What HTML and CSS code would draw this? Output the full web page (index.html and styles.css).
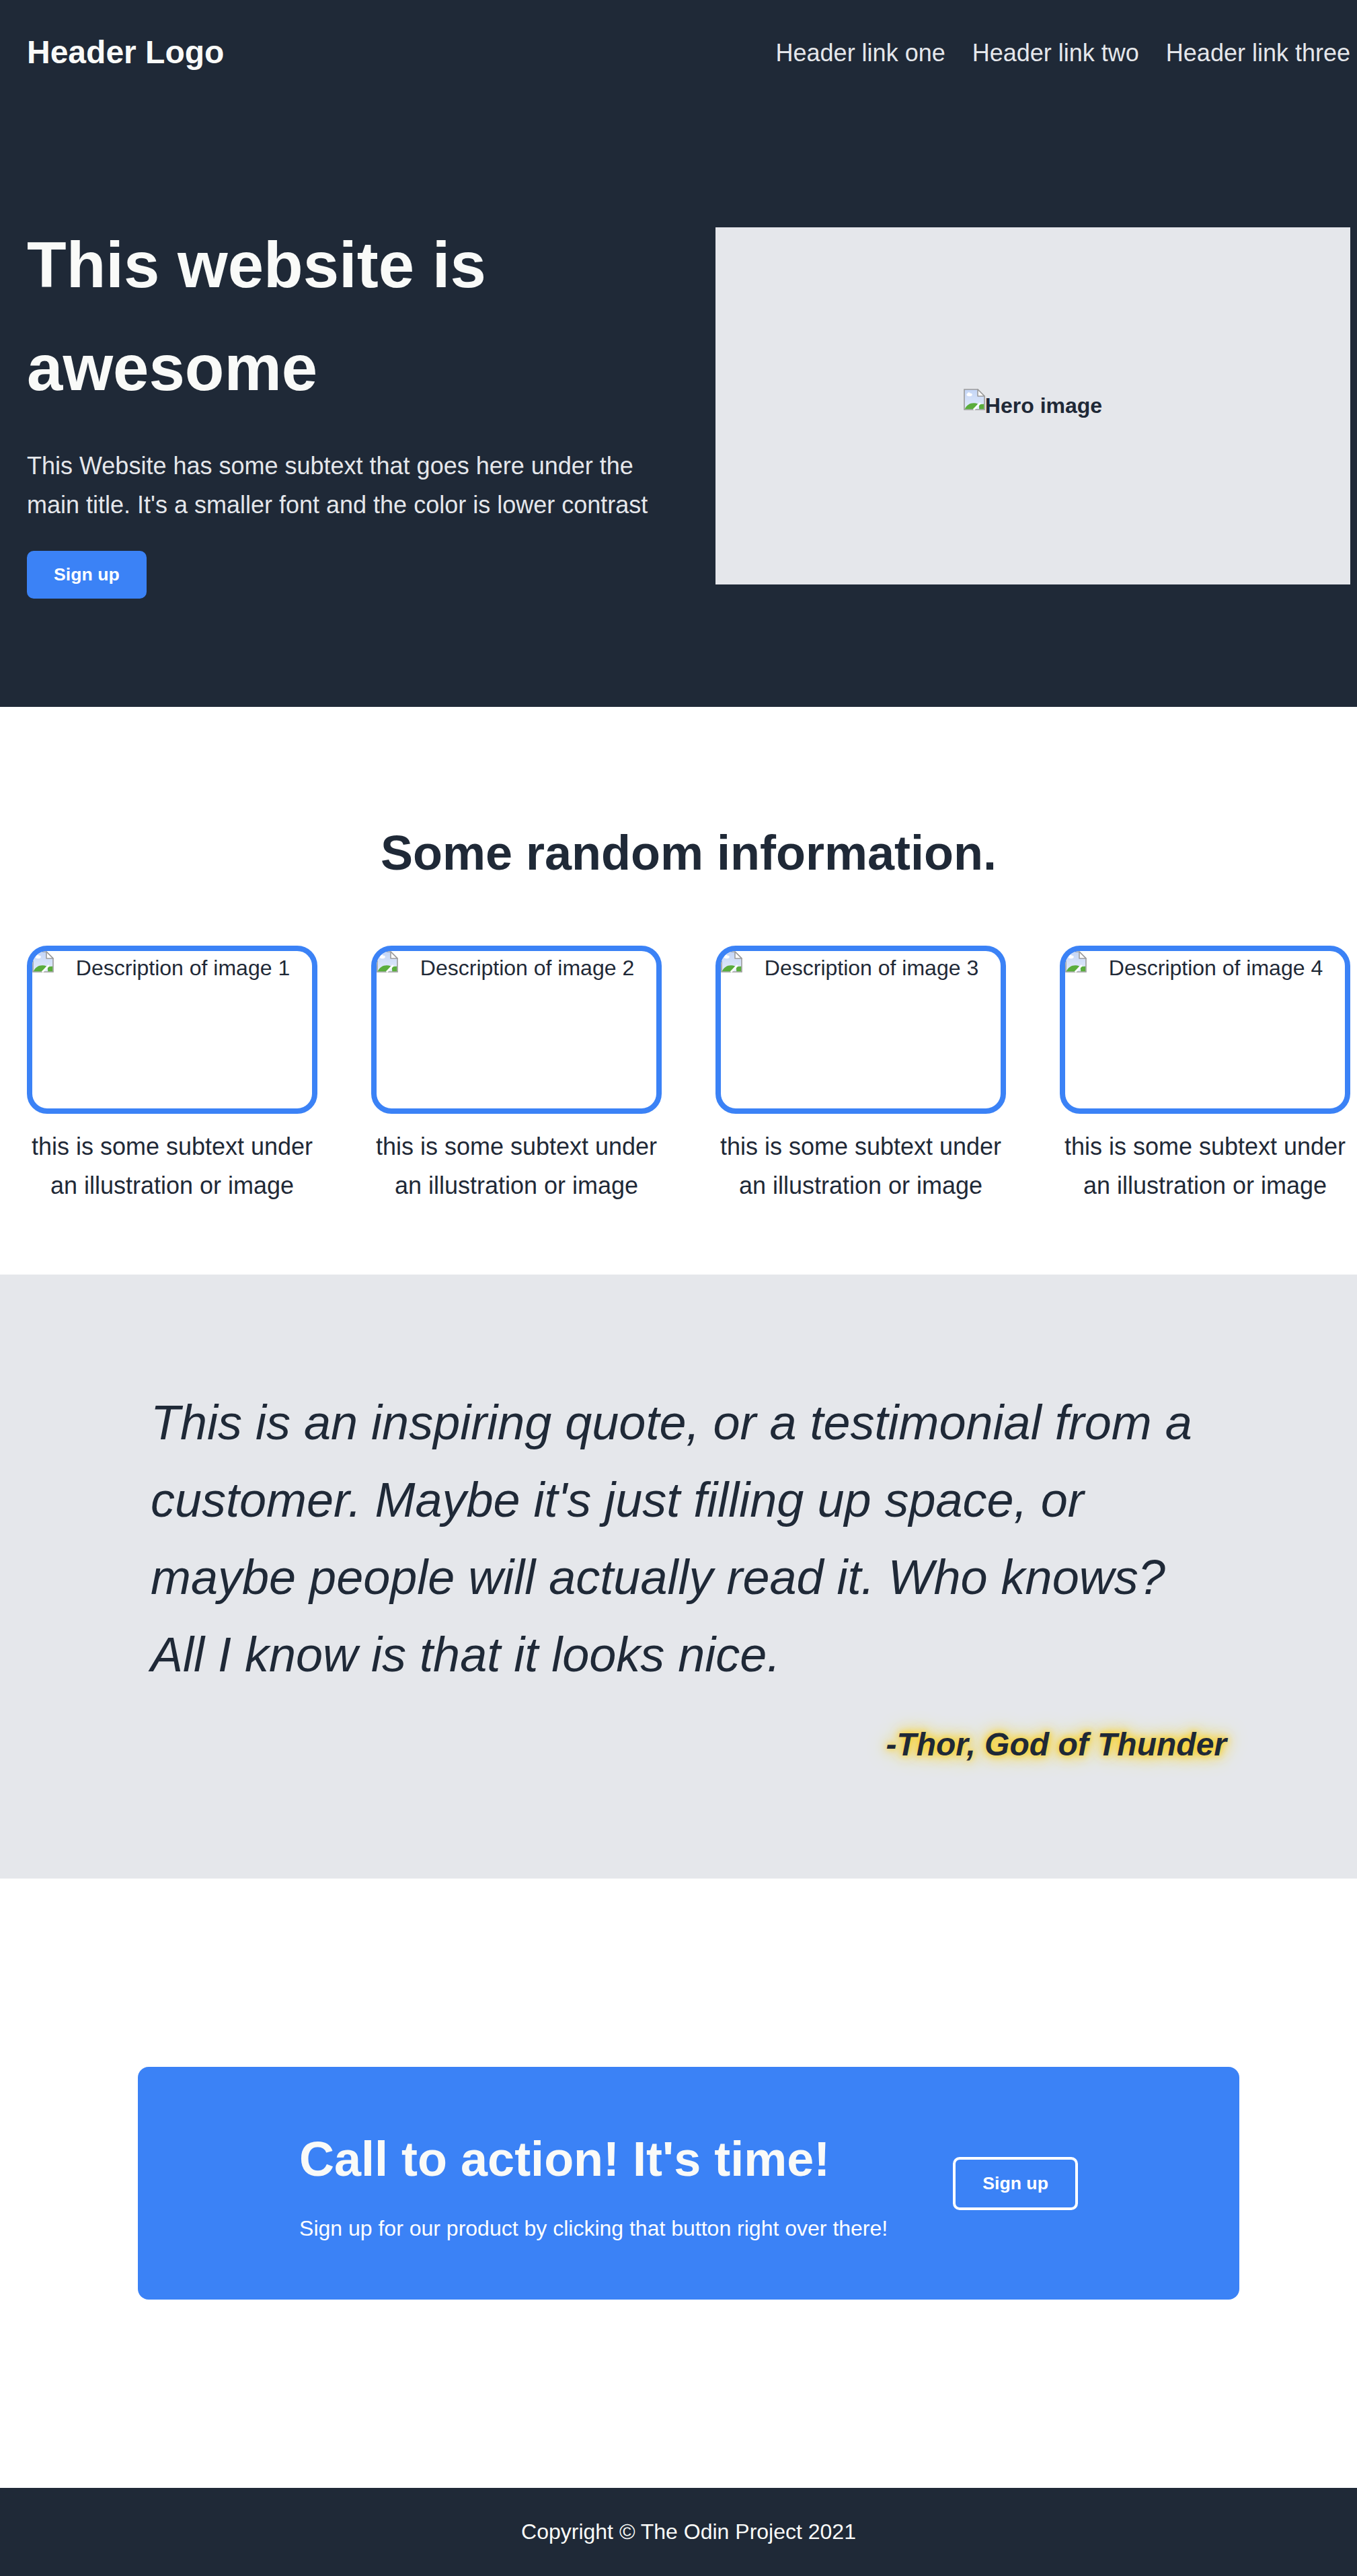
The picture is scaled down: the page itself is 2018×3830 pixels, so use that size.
FILE: index.html
```html
<!DOCTYPE html>
<html lang="en">
<head>
<meta charset="utf-8">
<title>Landing Page</title>
<link rel="stylesheet" href="styles.css">
</head>
<body>
<svg class="defs" width="0" height="0" aria-hidden="true">
  <defs>
    <linearGradient id="bi-grad" x1="0" y1="0" x2="0" y2="1">
      <stop offset="0" stop-color="#c3d5f6"/>
      <stop offset="1" stop-color="#e4ecfb"/>
    </linearGradient>
    <symbol id="broken" viewBox="0 0 16 16">
      <path d="M0.5 0.5H10.5L15.5 5.5V15.5H0.5Z" fill="url(#bi-grad)" stroke="#9c9c9c" stroke-width="0.8"/>
      <path d="M10.5 0.5V5.5H15.5Z" fill="#ffffff" stroke="#9c9c9c" stroke-width="0.8" stroke-linejoin="round"/>
      <ellipse cx="4.3" cy="4.4" rx="2.1" ry="1.2" fill="#ffffff"/>
      <circle cx="3.9" cy="3.5" r="0.9" fill="#ffffff"/>
      <path d="M0.9 15.1C2.2 11.4 6.6 9.6 10.6 11.2L7.6 15.1Z" fill="#5aad3c"/>
      <path d="M11.4 11.6L15.1 11.4L15.1 15.1L11.6 15.1Z" fill="#5aad3c"/>
      <path d="M7.4 15.6L12.4 10.6" stroke="#ffffff" stroke-width="1.4"/>
    </symbol>
  </defs>
</svg>

<div class="dark">
  <header class="wrap header">
    <div class="logo">Header Logo</div>
    <nav class="nav">
      <a href="#">Header link one</a>
      <a href="#">Header link two</a>
      <a href="#">Header link three</a>
    </nav>
  </header>

  <section class="wrap hero">
    <div class="hero-text">
      <h1>This website is awesome</h1>
      <p>This Website has some subtext that goes here under the main title. It's a smaller font and the color is lower contrast</p>
      <button class="btn">Sign up</button>
    </div>
    <div class="hero-img">
      <div class="alt">
        <svg class="bicon"><use href="#broken"/></svg>
        <span>Hero image</span>
      </div>
    </div>
  </section>
</div>

<section class="info">
  <div class="wrap">
    <h2 class="info-title">Some random information.</h2>
    <div class="cards">
      <div class="card">
        <div class="card-img"><svg class="bicon float"><use href="#broken"/></svg><p>Description of image 1</p></div>
        <p class="card-text">this is some subtext under an illustration or image</p>
      </div>
      <div class="card">
        <div class="card-img"><svg class="bicon float"><use href="#broken"/></svg><p>Description of image 2</p></div>
        <p class="card-text">this is some subtext under an illustration or image</p>
      </div>
      <div class="card">
        <div class="card-img"><svg class="bicon float"><use href="#broken"/></svg><p>Description of image 3</p></div>
        <p class="card-text">this is some subtext under an illustration or image</p>
      </div>
      <div class="card">
        <div class="card-img"><svg class="bicon float"><use href="#broken"/></svg><p>Description of image 4</p></div>
        <p class="card-text">this is some subtext under an illustration or image</p>
      </div>
    </div>
  </div>
</section>

<section class="quote-sec">
  <div class="wrap">
    <div class="quote">
      <p class="quote-text">This is an inspiring quote, or a testimonial from a customer. Maybe it's just filling up space, or maybe people will actually read it. Who knows? All I know is that it looks nice.</p>
      <p class="quote-author">-Thor, God of Thunder</p>
    </div>
  </div>
</section>

<section class="cta-sec">
  <div class="wrap cta-wrap">
    <div class="cta">
      <div class="cta-text">
        <h2>Call to action! It's time!</h2>
        <p>Sign up for our product by clicking that button right over there!</p>
      </div>
      <button class="btn btn-outline">Sign up</button>
    </div>
  </div>
</section>

<footer class="footer">
  <div class="wrap footer-inner">Copyright © The Odin Project 2021</div>
</footer>
</body>
</html>
```

FILE: styles.css
```css
* {
  box-sizing: border-box;
}

html, body {
  margin: 0;
  padding: 0;
}

body {
  font-family: "Liberation Sans", Arial, sans-serif;
  font-size: 36px;
  line-height: 1.6;
  color: #1f2937;
  background: #ffffff;
}

.defs {
  position: absolute;
  width: 0;
  height: 0;
  overflow: hidden;
}

.wrap {
  width: 1968px;
  margin-left: 40px;
}

.dark {
  background: #1f2937;
}

/* Header */
.header {
  display: flex;
  justify-content: space-between;
  align-items: center;
  padding: 40px 0;
}

.logo {
  font-size: 48px;
  font-weight: bold;
  color: #f9faf8;
}

.nav {
  display: flex;
  gap: 40px;
}

.nav a {
  color: #e5e7eb;
  text-decoration: none;
  font-size: 36px;
}

/* Hero */
.hero {
  display: flex;
  align-items: center;
  gap: 80px;
  padding: 160px 0 161px;
}

.hero-text {
  width: 944px;
  flex: none;
}

.hero-text h1 {
  margin: 0;
  font-size: 96px;
  font-weight: bold;
  line-height: 1.6;
  color: #f9faf8;
}

.hero-text p {
  margin: 40px 0 0;
  font-size: 36px;
  color: #e5e7eb;
}

.btn {
  font-family: "Liberation Sans", Arial, sans-serif;
  font-size: 26.67px;
  font-weight: bold;
  line-height: normal;
  color: #ffffff;
  background: #3b82f6;
  border: none;
  border-radius: 10px;
  padding: 20px 40px;
  cursor: pointer;
}

.hero-text .btn {
  margin-top: 40px;
}

.hero-img {
  width: 944px;
  height: 531px;
  flex: none;
  background: #e5e7eb;
  display: flex;
  align-items: center;
  justify-content: center;
}

.alt {
  display: flex;
  align-items: flex-start;
  font-size: 32px;
  font-weight: bold;
  line-height: 1.6;
  color: #1f2937;
}

.bicon {
  width: 32px;
  height: 32px;
  display: block;
  flex: none;
}

.bicon.float {
  float: left;
}

/* Info section */
.info {
  padding: 160px 0 103px;
}

.info-title {
  margin: 0;
  text-align: center;
  font-size: 72px;
  font-weight: bold;
  line-height: 1.6;
  color: #1f2937;
}

.cards {
  display: flex;
  justify-content: space-between;
  margin-top: 80px;
}

.card {
  width: 432px;
}

.card-img {
  height: 250px;
  border: 8px solid #3b82f6;
  border-radius: 30px;
  background: #ffffff;
  overflow: hidden;
}

.card-img p {
  margin: 0;
  font-size: 32px;
  line-height: 1.6;
  text-align: center;
  color: #1f2937;
}

.card-text {
  margin: 20px 0 0;
  text-align: center;
  font-size: 36px;
  line-height: 1.6;
  color: #1f2937;
}

/* Quote */
.quote-sec {
  background: #e5e7eb;
  padding: 163px 0 160px;
}

.quote {
  width: 1600px;
  margin: 0 auto;
}

.quote-text {
  margin: 0;
  font-size: 72px;
  font-style: italic;
  font-weight: 300;
  line-height: 1.6;
  color: #1f2937;
}

.quote-author {
  margin: 38px 0 0;
  text-align: right;
  font-size: 48px;
  font-weight: bold;
  font-style: italic;
  line-height: 1.6;
  color: #1f2937;
  text-shadow: 0 0 10px #facc15, 0 0 20px #facc15, 0 0 30px #fde047;
}

/* CTA */
.cta-sec {
  padding: 280px 0;
}

.cta-wrap {
  display: flex;
  justify-content: center;
}

.cta {
  display: flex;
  align-items: center;
  gap: 97px;
  padding: 80px 240px;
  background: #3b82f6;
  border-radius: 16px;
}

.cta-text h2 {
  margin: 0 0 20px;
  font-size: 72px;
  font-weight: bold;
  line-height: 1.6;
  color: #f9faf8;
}

.cta-text p {
  margin: 0;
  font-size: 32px;
  line-height: 1.6;
  color: #ffffff;
}

.btn-outline {
  background: transparent;
  border: 4px solid #ffffff;
  flex: none;
}

/* Footer */
.footer {
  background: #1f2937;
  color: #f9faf8;
  font-size: 32px;
  line-height: 1.6;
  padding: 40px 0;
}

.footer-inner {
  text-align: center;
}
```
